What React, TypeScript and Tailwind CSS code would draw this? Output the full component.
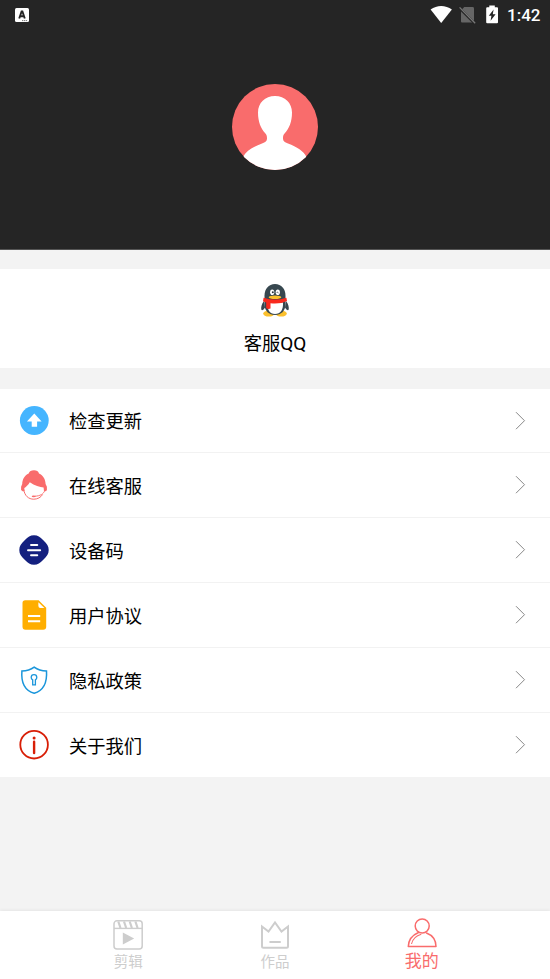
import type { ReactNode } from "react";

function StatusBar() {
  return (
    <div className="flex h-[30px] items-center justify-between pl-[15px] pr-[10px]">
      <svg width="14" height="14" viewBox="0 0 14 14">
        <rect width="14" height="14" rx="1.5" fill="#fff" />
        <path d="M4.2 10.5 6.6 3.4H7.4L9.800 10.500M5 8.300H9" fill="none" stroke="#252525" strokeWidth="1.900" />
        <path d="M7 12.600H12.500" stroke="#777" strokeWidth="1" strokeDasharray="1.3 0.6" />
      </svg>
      <div className="flex items-center">
        <svg width="70" height="22" viewBox="430 4 70 22">
          {/* Wifi */}
          <path d="M430.6 9.4C436.8 4.7 445.6 4.7 451.9 9.4L441.2 23Z" fill="#fff" />
          {/* No sim */}
          <path d="M464.2 7H472.6Q474 7 474 8.4V21.5Q474 22.5 473 22.5H462Q461 22.5 461 21.5V10.4Z" fill="#666" />
          <path d="M458.4 7.2 475.4 24.2" stroke="#252525" strokeWidth="2.6" />
          <path d="M459.6 7.4 475.2 23.2" stroke="#777" strokeWidth="1.3" />
          {/* Battery */}
          <path d="M489.3 5.4H494.8V7.2H497Q498 7.2 498 8.2V22.2Q498 23.2 497 23.2H487.2Q486.2 23.2 486.2 22.2V8.2Q486.2 7.2 487.2 7.2H489.3Z" fill="#fff" />
          <path d="M493.6 9.6 488.8 15.8H491.4L490.6 20.8 495.6 14.3H492.8Z" fill="#252525" />
        </svg>
        <span className="ml-[7px] w-[33px] whitespace-nowrap pt-px font-['Roboto',sans-serif] text-[17px] font-medium leading-[29px] text-white">
          1:42
        </span>
      </div>
    </div>
  );
}

function Avatar() {
  return (
    <svg width="86" height="86" viewBox="0 0 86 86">
      <clipPath id="avatar">
        <circle cx="43" cy="43" r="43" />
      </clipPath>
      <g clipPath="url(#avatar)">
        <rect width="86" height="86" fill="#f96c6c" />
        <path
          d="M43 12C53 12 60 19 60 28.500C60 38 57 44.500 53 49C51.200 51 51 52 51 54.500C51 57 52.500 58.200 56 59.500C65 63 71.500 67 74.500 73V90H11V73C14 67 21 63 30 59.500C33.500 58.200 35 57 35 54.500C35 52 34.700 51 33 49C29 44.500 26 38 26 28.500C26 19 33 12 43 12Z"
          fill="#fff"
        />
      </g>
    </svg>
  );
}

function Penguin() {
  return (
    <svg width="30" height="34" viewBox="0 0 30 34">
      <ellipse cx="8.800" cy="29.600" rx="5.600" ry="3" fill="#fbc02d" />
      <ellipse cx="21.200" cy="29.600" rx="5.600" ry="3" fill="#fbc02d" />
      <path d="M4 17C1.600 20 .7 23.500 1.400 25.800C2 27 4 25.400 5 23.500M26 17C28.400 20 29.300 23.500 28.600 25.800C28 27 26 25.400 25 23.500" fill="#37474f" />
      <path d="M15 .1C8.500.1 4.500 5.300 4.500 11.500V20C4.500 27 9 31 15 31C21 31 25.500 27 25.500 20V11.500C25.500 5.300 21.500.1 15 .1Z" fill="#37474f" />
      <path d="M7.500 18.500H23C23.500 25.500 20.500 30 15 30C9.500 30 7 25.500 7.500 18.500Z" fill="#fff" />
      <ellipse cx="12.200" cy="8.300" rx="2.100" ry="2.800" fill="#fff" />
      <ellipse cx="17.800" cy="8.300" rx="2.100" ry="2.800" fill="#fff" />
      <circle cx="12.800" cy="8.300" r="1" fill="#263238" />
      <path d="M16.800 8.800Q17.500 7.300 18.400 8.800" fill="none" stroke="#263238" strokeWidth=".9" />
      <ellipse cx="15" cy="13.200" rx="6.300" ry="1.800" fill="#fbc02d" />
      <path d="M3.600 13.700Q15 17.500 26.400 13.700L27 17Q20 20.400 10.500 19.300V24.500Q8 25.600 6.200 24V18.600L3 17.200Z" fill="#f9291d" />
    </svg>
  );
}

const updateIcon = (
  <svg width="30" height="30" viewBox="0 0 30 30">
    <circle cx="15.300" cy="14.500" r="14.400" fill="#45b5ff" />
    <path d="M15.300 7.500 22.600 15.500H18.100V20.800H12.700V15.500H7.900Z" fill="#fff" />
  </svg>
);

const serviceIcon = (
  <svg width="30" height="30" viewBox="0 0 30 30">
    <path
      d="M15 .3C17.600.3 19.400 1.500 20 3.400C24.300 5.500 26.400 9 26.600 14L27.900 16.800V20.300L26.600 21.200H25L24.600 17.500C21 17 15.500 15.500 10.800 12.200C9.300 14.800 6.700 17.200 5.300 17.900L5.500 21.200H3.600L2.100 20V16.700L3.200 14C3.400 9 5.500 5.500 9.700 3.400C10.400 1.500 12.200.3 15 .3Z"
      fill="#f96c6c"
    />
    <path d="M4.700 19.500C5.700 25.800 9.500 29.200 14.800 29.200C18.500 29.200 21.800 27.400 23.600 24.500" fill="none" stroke="#f96c6c" strokeWidth="1" />
    <path d="M25.800 20.500C24.600 24 21 26 16 26.200" fill="none" stroke="#f96c6c" strokeWidth=".9" />
    <ellipse cx="14.700" cy="26.300" rx="2" ry=".9" fill="#f96c6c" />
  </svg>
);

const deviceIcon = (
  <svg width="30" height="30" viewBox="0 0 30 30">
    <path
      d="M15 .3C19 .3 20.800 2 24.300 5.300C28 8.800 29.700 11 29.700 15C29.700 19 28 21.200 24.300 24.700C20.800 28 19 29.700 15 29.700C11 29.700 9.200 28 5.700 24.700C2 21.200.3 19 .3 15C.3 11 2 8.800 5.700 5.300C9.200 2 11 .3 15 .3Z"
      fill="#14207f"
    />
    <path d="M12 10H18.300M9 15.200H21.200M12 20.300H18.300" stroke="#fff" strokeWidth="1.900" strokeLinecap="round" />
  </svg>
);

const agreementIcon = (
  <svg width="30" height="30" viewBox="0 0 30 30">
    <path d="M6.300.2H19.600L27.200 7.800V26.800Q27.200 29.800 24.200 29.800H6.500Q3.500 29.800 3.500 26.800V3Q3.500.2 6.300.2Z" fill="#ffae00" />
    <path d="M19.400 2.200V6Q19.400 8 21.400 8H25.400Z" fill="#fff" />
    <path d="M9 16H21.200M9 21.200H21.200" stroke="#fff" strokeWidth="1.900" />
  </svg>
);

const privacyIcon = (
  <svg width="30" height="30" viewBox="0 0 30 30">
    <path
      d="M15.200 2.200C19 5 23.200 6 27.500 6.100C28.200 17 24.700 25.500 15.200 28.300C5.700 25.500 2 17 2.900 6.100C7.200 6 11.400 5 15.200 2.200Z"
      fill="none"
      stroke="#1a96db"
      strokeWidth="1.500"
    />
    <path
      d="M13.700 14.800C12.700 14.300 12.200 13.500 12.200 12.500C12.200 10.800 13.400 9.700 15 9.700C16.700 9.700 17.800 10.900 17.800 12.500C17.800 13.500 17.300 14.300 16.400 14.800V19.900H13.700Z"
      fill="none"
      stroke="#1a96db"
      strokeWidth="1.300"
    />
  </svg>
);

const aboutIcon = (
  <svg width="30" height="30" viewBox="0 0 30 30">
    <circle cx="15.100" cy="14.700" r="13.800" fill="none" stroke="#d81e06" strokeWidth="1.800" />
    <circle cx="15.100" cy="8" r="1.500" fill="#d81e06" />
    <path d="M15.100 11.800V23" stroke="#d81e06" strokeWidth="2.400" strokeLinecap="round" />
  </svg>
);

const menu: { label: string; icon: ReactNode }[] = [
  { label: "检查更新", icon: updateIcon },
  { label: "在线客服", icon: serviceIcon },
  { label: "设备码", icon: deviceIcon },
  { label: "用户协议", icon: agreementIcon },
  { label: "隐私政策", icon: privacyIcon },
  { label: "关于我们", icon: aboutIcon },
];

function MenuRow({ label, icon }: { label: string; icon: ReactNode }) {
  return (
    <div className="flex h-[65px] items-center border-b border-[#f2f2f2] pl-[19px] pr-6 first:h-16 last:h-16 last:border-b-0">
      {icon}
      <span className="ml-5 flex-1 pt-[3px] text-[18.3px] leading-6">{label}</span>
      <svg width="11" height="20" viewBox="0 0 11 20">
        <path d="M1 1.200 9.500 9.700 1 18.200" fill="none" stroke="#888" strokeWidth="1" />
      </svg>
    </div>
  );
}

function BottomNav() {
  return (
    <nav className="flex h-[68px] bg-white px-[55px] shadow-[0_-1px_3px_rgba(0,0,0,0.06)]">
      <div className="flex flex-1 flex-col items-center pt-2 text-[#cdcdcd]">
        <svg width="30" height="32" viewBox="0 0 30 32" fill="none" stroke="currentColor">
          <rect x="1" y="1.800" width="28.200" height="28.200" rx="3" strokeWidth="1.500" />
          <path d="M1 9.400H29" strokeWidth="1.400" />
          <path d="M5.300 2.500 7.500 9M11 2.500 13.200 9M16.700 2.500 18.900 9M22.400 2.500 24.600 9" strokeWidth="2.200" />
          <path d="M9.800 13.500 21.200 19.500 9.800 25.500Z" fill="currentColor" stroke="none" />
        </svg>
        <span className="mt-[2px] text-[14.500px] leading-5">剪辑</span>
      </div>
      <div className="flex flex-1 flex-col items-center pt-2 text-[#cdcdcd]">
        <svg width="30" height="32" viewBox="0 0 30 32" fill="none" stroke="currentColor">
          <path d="M2 7.500 8.500 12.500 15 3.500 21.500 12.500 28 7.500V27.300Q28 28.800 26.500 28.800H3.500Q2 28.800 2 27.300Z" strokeWidth="2" />
          <path d="M10.200 23.100H20" strokeWidth="2" strokeLinecap="round" />
        </svg>
        <span className="mt-[2px] text-[14.500px] leading-5">作品</span>
      </div>
      <div className="flex flex-1 flex-col items-center pt-[7px] text-[#f96c6c]">
        <svg width="30" height="32" viewBox="0 0 30 32" fill="none" stroke="currentColor" strokeWidth="1.500">
          <circle cx="15.200" cy="8" r="7" />
          <path d="M11.500 14.500C5.200 17.200 1.500 22 1.300 28.500H29C28.900 22.500 25.500 17.300 19.500 15" strokeLinejoin="round" strokeLinecap="round" />
          <path d="M4.500 26C5.500 21.500 8.500 17.900 14.300 16.300" strokeWidth="1.100" />
        </svg>
        <span className="-mt-px text-[17px] leading-6">我的</span>
      </div>
    </nav>
  );
}

export default function App() {
  return (
    <div className="flex h-[979px] w-full flex-col overflow-hidden bg-[#f3f3f3] font-['Roboto','Noto_Sans_CJK_SC',sans-serif] text-black">
      <header className="h-[250px] border-b border-[#555] bg-[#252525]">
        <StatusBar />
        <div className="flex justify-center pt-[54px]">
          <Avatar />
        </div>
      </header>

      {/* QQ support */}
      <div className="mt-[19px] flex h-[99px] flex-col items-center bg-white pt-[15px]">
        <Penguin />
        <span className="mt-[14px] text-[18.300px] leading-6">
          客服<span className="text-[19px]">QQ</span>
        </span>
      </div>

      <div className="mt-[21px] bg-white">
        {menu.map((item) => (
          <MenuRow key={item.label} label={item.label} icon={item.icon} />
        ))}
      </div>

      <div className="flex-1" />
      <BottomNav />
    </div>
  );
}
